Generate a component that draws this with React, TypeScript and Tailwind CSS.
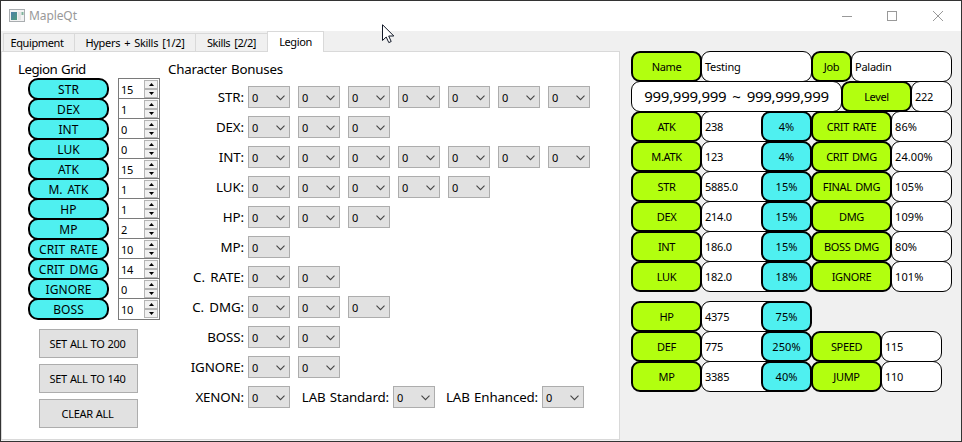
import React from "react";

const legion: [string, number][] = [
  ["STR", 15], ["DEX", 1], ["INT", 0], ["LUK", 0], ["ATK", 15], ["M. ATK", 1],
  ["HP", 1], ["MP", 2], ["CRIT RATE", 10], ["CRIT DMG", 14], ["IGNORE", 0], ["BOSS", 10],
];

const bonuses: [string, number][] = [
  ["STR:", 7], ["DEX:", 3], ["INT:", 7], ["LUK:", 5], ["HP:", 3], ["MP:", 1],
  ["C. RATE:", 2], ["C. DMG:", 3], ["BOSS:", 2], ["IGNORE:", 2],
];

const stats: [string, string, string, string, string][] = [
  ["ATK", "238", "4%", "CRIT RATE", "86%"],
  ["M.ATK", "123", "4%", "CRIT DMG", "24.00%"],
  ["STR", "5885.0", "15%", "FINAL DMG", "105%"],
  ["DEX", "214.0", "15%", "DMG", "109%"],
  ["INT", "186.0", "15%", "BOSS DMG", "80%"],
  ["LUK", "182.0", "18%", "IGNORE", "101%"],
];

const extras: [string, string, string, string, string][] = [
  ["HP", "4375", "75%", "", ""],
  ["DEF", "775", "250%", "SPEED", "115"],
  ["MP", "3385", "40%", "JUMP", "110"],
];

function Combo() {
  return (
    <div className="flex h-[22px] w-[42px] shrink-0 items-center justify-between border border-[#adadad] bg-[#e1e1e1] pl-[3px] pr-1">
      <span className="pt-px text-[11px] leading-none tracking-normal">0</span>
      <svg className="mt-px" width="9" height="6" viewBox="0 0 9 6" fill="none" stroke="#444" strokeWidth="1.1">
        <path d="M0.5 0.7 L4.5 4.7 L8.5 0.7" />
      </svg>
    </div>
  );
}

function SpinButton({ up }: { up?: boolean }) {
  return (
    <div className="flex h-[9px] w-[14px] items-center justify-center border border-[#b4b4b4] bg-[#f0f0f0]">
      <svg width="5" height="3" viewBox="0 0 5 3">
        <path d={up ? "M0 3 L2.5 0 L5 3 Z" : "M0 0 L5 0 L2.5 3 Z"} fill="#000" />
      </svg>
    </div>
  );
}

function Spin({ value }: { value: number }) {
  return (
    <div className="-mb-0.5 flex h-[22px] w-[42px] justify-between border border-[#7a7a7a] bg-white pl-0.5 pr-px pt-px">
      <span className="pt-1 text-[11px] leading-none tracking-[-0.2px]">{value}</span>
      <div className="flex flex-col">
        <SpinButton up />
        <SpinButton />
      </div>
    </div>
  );
}

function Tag({ children, className }: { children: React.ReactNode; className: string }) {
  return (
    <div className={`relative flex h-[31px] shrink-0 items-center justify-center rounded-[9px] border-2 border-black text-[11px] leading-none [word-spacing:1px] ${className}`}>
      {children}
    </div>
  );
}

function Field({ children, className }: { children: string; className: string }) {
  const tracking = children.endsWith("%") ? "tracking-[0.1px]" : "tracking-[-0.25px]";
  return (
    <div className={`flex h-[31px] shrink-0 items-center rounded-[9px] border border-black bg-white pl-[3px] text-[11px] leading-none ${tracking} ${className}`}>
      {children}
    </div>
  );
}

const green = "bg-[#b2ff0f] tracking-[-0.35px]";

function Row({ children }: { children: React.ReactNode }) {
  return <div className="-mb-px flex">{children}</div>;
}

function StatRow({ row, wide }: { row: [string, string, string, string, string]; wide: boolean }) {
  return (
    <Row>
      <Tag className={`w-[71px] ${green}`}>{row[0]}</Tag>
      <Field className="-ml-px w-[101px]">{row[1]}</Field>
      <Tag className="-ml-[41px] w-[51px] bg-[#4ff0f0] tracking-[0.1px]">{row[2]}</Tag>
      {row[3] && (
        <>
          <Tag className={`-ml-px ${wide ? "w-[81px]" : "w-[71px]"} ${green}`}>{row[3]}</Tag>
          <Field className="-ml-px w-[61px]">{row[4]}</Field>
        </>
      )}
    </Row>
  );
}

function PushButton({ children }: { children: React.ReactNode }) {
  return (
    <button className="flex h-[29px] w-[99px] items-center justify-center border border-[#adadad] bg-[#e1e1e1] pb-px pr-0.5 text-[11px] leading-none tracking-[-0.3px] [word-spacing:0.5px]">
      {children}
    </button>
  );
}

export default function App() {
  return (
    <div className="relative flex h-[442px] w-[962px] flex-col overflow-hidden border border-[#333] bg-[#f0f0f0] font-['Noto_Sans',sans-serif] text-black">
      <header className="flex h-[30px] shrink-0 items-center bg-white pl-2">
        <svg width="16" height="14" viewBox="0 0 16 14">
          <defs>
            <linearGradient id="screen" x1="0" y1="0" x2="1" y2="1">
              <stop offset="0" stopColor="#4c7fa8" />
              <stop offset="1" stopColor="#4f9b7c" />
            </linearGradient>
          </defs>
          <rect x="0.5" y="0.5" width="15" height="12" fill="#f3f3f3" stroke="#a9adb0" />
          <rect x="2" y="3" width="6" height="8" fill="url(#screen)" />
          <rect x="9" y="3" width="3" height="8" fill="#e4e4e4" />
          <rect x="12.5" y="3" width="2" height="3" fill="#7fb39b" />
        </svg>
        <span className="ml-1 text-[12px] leading-none tracking-[-0.1px] text-[#999]">MapleQt</span>
        <svg className="ml-auto mr-4" width="104" height="12" viewBox="0 0 104 12" fill="none" stroke="#999">
          <path d="M1 6.5 H11" />
          <rect x="46.5" y="1.5" width="9" height="9" />
          <path d="M92 1 L102 11 M102 1 L92 11" />
        </svg>
      </header>

      <div className="flex">
        <main>
          <nav className="relative z-10 -mb-px flex h-[21px] items-end pl-0.5 text-[11px] leading-none tracking-[-0.4px] [word-spacing:1.5px]">
            <div className="flex h-[19px] w-[72px] items-center justify-center border border-[#d9d9d9] pr-1">Equipment</div>
            <div className="-ml-px flex h-[19px] w-[122px] items-center justify-center border border-[#d9d9d9] tracking-[-0.3px]">Hypers + Skills [1/2]</div>
            <div className="-ml-px flex h-[19px] w-[73px] items-center justify-center border border-[#d9d9d9]">Skills [2/2]</div>
            <div className="-ml-px flex h-[21px] w-[57px] items-center justify-center border border-b-0 border-[#d9d9d9] bg-white pb-px">Legion</div>
          </nav>
          <section className="flex h-[389px] w-[619px] border border-[#d9d9d9] bg-white">
            <div className="w-[166px] pl-4 pt-[9px]">
              <h2 className="mb-px h-4 text-[13.33px] leading-4 tracking-[-0.55px] [word-spacing:1px]">Legion Grid</h2>
              <div className="flex gap-[9px] pl-2.5">
                <div className="w-[81px]">
                  {legion.map(([name]) => (
                    <div key={name} className="-mb-0.5 flex h-[22px] items-center justify-center rounded-[10px] border-2 border-black bg-[#4ff0f0] pt-0.5 text-[12px] leading-none tracking-[0.1px] [word-spacing:1.5px]">
                      {name}
                    </div>
                  ))}
                </div>
                <div>
                  {legion.map(([name, value]) => <Spin key={name} value={value} />)}
                </div>
              </div>
              <div className="mt-[11px] flex flex-col gap-1.5 pl-[21px]">
                <PushButton>SET ALL TO 200</PushButton>
                <PushButton>SET ALL TO 140</PushButton>
                <PushButton>CLEAR ALL</PushButton>
              </div>
            </div>
            <div className="pt-[9px]">
              <h2 className="h-4 text-[13.33px] leading-4 tracking-[-0.25px] [word-spacing:1px]">Character Bonuses</h2>
              <div className="mt-[9px] flex flex-col gap-2">
                {bonuses.map(([name, count]) => (
                  <div key={name} className="flex items-center">
                    <div className="w-[76px] text-right text-[13.33px] leading-5 tracking-[-0.1px] [word-spacing:2px]">{name}</div>
                    <div className="ml-1 flex gap-2">
                      {Array.from({ length: count }, (_, i) => <Combo key={i} />)}
                    </div>
                  </div>
                ))}
                <div className="flex items-center text-[13.33px] leading-5 tracking-[-0.15px] [word-spacing:1px]">
                  <div className="mr-1 w-[76px] text-right">XENON:</div>
                  <Combo />
                  <div className="mr-1 w-[99px] text-right">LAB Standard:</div>
                  <Combo />
                  <div className="mr-1 w-[103px] text-right">LAB Enhanced:</div>
                  <Combo />
                </div>
              </div>
            </div>
          </section>
        </main>

        <aside className="pl-[11px] pt-5">
          <Row>
            <Tag className={`w-[71px] ${green}`}>Name</Tag>
            <Field className="-ml-px w-[111px]">Testing</Field>
            <Tag className={`-ml-px w-[41px] ${green}`}>Job</Tag>
            <Field className="-ml-px w-[101px]">Paladin</Field>
          </Row>
          <Row>
            <div className="flex h-[31px] w-[211px] items-center justify-center rounded-[9px] border border-black bg-white text-[15px] leading-none tracking-[-0.3px] [word-spacing:2.5px]">
              999,999,999 ~ 999,999,999
            </div>
            <Tag className={`-ml-px w-[71px] ${green}`}>Level</Tag>
            <Field className="-ml-px w-[41px]">222</Field>
          </Row>
          {stats.map((row) => <StatRow key={row[0]} row={row} wide />)}
          <div className="h-2.5" />
          {extras.map((row) => <StatRow key={row[0]} row={row} wide={false} />)}
        </aside>
      </div>

      <svg className="absolute left-[381px] top-[23px]" width="13" height="20" viewBox="0 0 13 20">
        <path d="M0.5 0.7 V16.5 L4.2 13 L6.8 18.6 L9.2 17.5 L6.7 12 H11.8 Z" fill="#fff" stroke="#111827" strokeWidth="1" />
      </svg>
    </div>
  );
}
